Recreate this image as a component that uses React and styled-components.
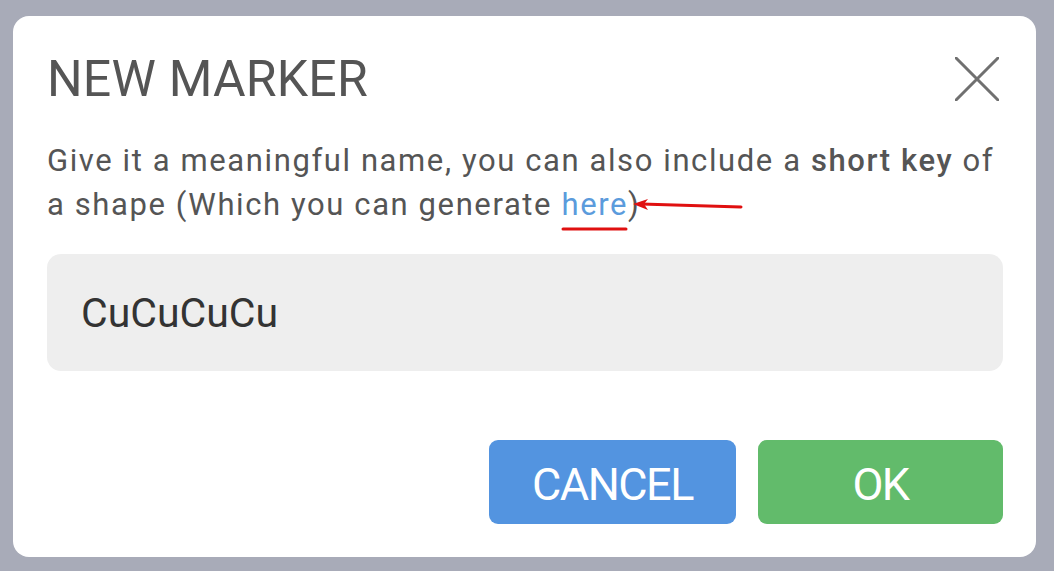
import styled, { createGlobalStyle } from 'styled-components';

const GlobalStyle = createGlobalStyle`
  html, body {
    margin: 0;
    padding: 0;
    background: #a8abb8;
  }
  body {
    font-family: Roboto, "Noto Sans", sans-serif;
  }
`;

const Backdrop = styled.div`
  width: 1054px;
  height: 571px;
  padding: 16px 0 0 13px;
  box-sizing: border-box;
`;

const Dialog = styled.div`
  width: 1023px;
  height: 541px;
  box-sizing: border-box;
  background: #fff;
  border-radius: 16px;
  padding: 38px 33px 33px 34px;
  display: flex;
  flex-direction: column;
`;

const Header = styled.div`
  display: flex;
  align-items: center;
  justify-content: space-between;
  height: 50px;
`;

const Title = styled.h1`
  margin: 0;
  font-size: 50px;
  font-weight: 400;
  color: #555;
  line-height: 50px;
  letter-spacing: 0.2px;
`;

const CloseButton = styled.button`
  border: none;
  background: none;
  padding: 0;
  margin-right: 4px;
  width: 44px;
  height: 44px;
  display: flex;
  cursor: pointer;
`;

const Text = styled.p`
  margin: 35px 0 0;
  font-size: 31px;
  line-height: 44px;
  color: #555;
  letter-spacing: 1.6px;
  white-space: nowrap;

  b {
    font-weight: 500;
  }
`;

const Link = styled.a`
  position: relative;
  color: #5b9bdc;
  text-decoration: none;
`;

const Mark = styled.svg`
  position: absolute;
  overflow: visible;
  pointer-events: none;
`;

const Input = styled.input`
  margin-top: 27px;
  height: 117px;
  box-sizing: border-box;
  border: none;
  border-radius: 14px;
  background: #eeeeee;
  padding: 0 34px;
  font-family: Roboto, sans-serif;
  font-size: 41px;
  color: #333;
  outline: none;
`;

const Actions = styled.div`
  margin-top: auto;
  display: flex;
  justify-content: flex-end;
  gap: 22px;
`;

const Button = styled.button`
  width: ${(p) => p.$width}px;
  height: 84px;
  border: none;
  border-radius: 9px;
  background: ${(p) => p.$bg};
  color: #fff;
  font-family: Roboto, sans-serif;
  font-size: 45px;
  font-weight: 400;
  letter-spacing: -1.5px;
  padding: 4px 0 0;
  cursor: pointer;
`;

const App = () => {
  return (
    <>
      <GlobalStyle />
      <Backdrop>
        <Dialog>
          <Header>
            <Title>NEW MARKER</Title>
            <CloseButton aria-label="close">
              <svg width="44" height="44" viewBox="0 0 44 44">
                <path
                  d="M1 1 L43 43 M43 1 L1 43"
                  stroke="#707070"
                  strokeWidth="3"
                  strokeLinecap="round"
                />
              </svg>
            </CloseButton>
          </Header>
          <Text>
            Give it a meaningful name, you can also include a <b>short key</b> of
            <br />
            a shape (Which you can generate{' '}
            <Link href="#">
              here
              <Mark width="66" height="4" style={{ left: 1, bottom: -8 }}>
                <path d="M1 2 L64 2" stroke="#e01010" strokeWidth="3" strokeLinecap="round" />
              </Mark>
              <Mark width="112" height="12" style={{ left: 72, top: 13 }}>
                <path d="M8 5 L108 8" stroke="#e01010" strokeWidth="3" strokeLinecap="round" />
                <path d="M0 5 L15 0 L11 5 L15 11 Z" fill="#e01010" />
              </Mark>
            </Link>
            )
          </Text>
          <Input defaultValue="CuCuCuCu" />
          <Actions>
            <Button $bg="#5394e0" $width={247}>CANCEL</Button>
            <Button $bg="#62bb6b" $width={245}>OK</Button>
          </Actions>
        </Dialog>
      </Backdrop>
    </>
  );
};

export default App;
